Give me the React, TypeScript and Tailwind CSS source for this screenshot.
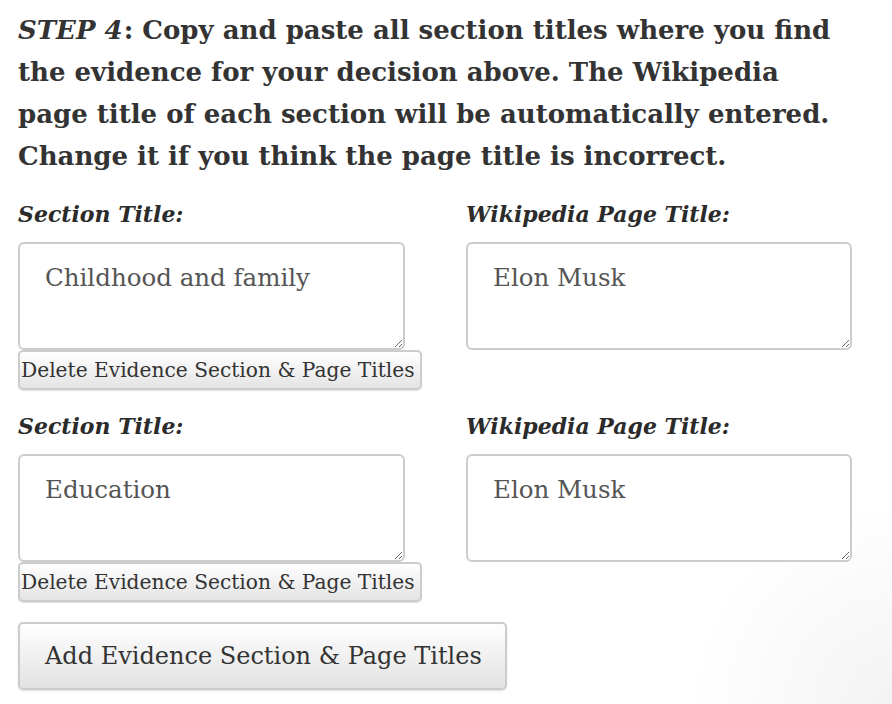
import React from "react";

const serif = { fontFamily: '"DejaVu Serif", Georgia, serif' };

function EvidenceRow({ section, page }: { section: string; page: string }) {
  return (
    <div className="grid grid-cols-[448px_1fr]">
      <div>
        <label className="block text-[22px] leading-[28px] font-bold italic text-[#2b2b2b]">Section Title:</label>
        <textarea
          defaultValue={section}
          className="mt-[14px] block w-[387px] h-[108px] rounded-[6px] border-2 border-[#cccccc] bg-white pl-[25px] pt-[18px] text-[24.5px] leading-[32px] text-[#555555] outline-none"
          style={serif}
        />
        <button
          className="block h-[40px] w-[404px] whitespace-nowrap rounded-[5px] border-2 border-[#cccccc] bg-gradient-to-b from-white to-[#e4e4e4] px-[1px] text-left text-[20.2px] text-[#333333] shadow-[0_1px_1px_rgba(0,0,0,0.12)]"
          style={serif}
        >
          Delete Evidence Section &amp; Page Titles
        </button>
      </div>
      <div>
        <label className="block text-[22px] leading-[28px] font-bold italic text-[#2b2b2b]">Wikipedia Page Title:</label>
        <textarea
          defaultValue={page}
          className="mt-[14px] block w-[386px] h-[108px] rounded-[6px] border-2 border-[#cccccc] bg-white pl-[25px] pt-[18px] text-[24.5px] leading-[32px] text-[#555555] outline-none"
          style={serif}
        />
      </div>
    </div>
  );
}

export default function App() {
  return (
    <div
      className="min-h-[704px] w-[892px] bg-[radial-gradient(circle_at_100%_100%,#f3f3f3_0px,#ffffff_200px)] px-[18px] pt-[9px] text-[#333333]"
      style={serif}
    >
      <h2 className="whitespace-nowrap text-[26px] leading-[42px] font-bold">
        <em className="pr-[1px]">STEP 4</em>: Copy and paste all section titles where you find
        <br />
        the evidence for your decision above. The Wikipedia
        <br />
        page title of each section will be automatically entered.
        <br />
        Change it if you think the page title is incorrect.
      </h2>

      <div className="mt-[23px] flex flex-col gap-[22px]">
        <EvidenceRow section="Childhood and family" page="Elon Musk" />
        <EvidenceRow section="Education" page="Elon Musk" />
      </div>

      <button
        className="mt-[20px] block h-[68px] w-[489px] whitespace-nowrap rounded-[5px] border-2 border-[#cccccc] bg-gradient-to-b from-white to-[#e2e2e2] pl-[25px] text-left text-[24px] text-[#333333] shadow-[0_1px_2px_rgba(0,0,0,0.12)]"
        style={serif}
      >
        Add Evidence Section &amp; Page Titles
      </button>
    </div>
  );
}
